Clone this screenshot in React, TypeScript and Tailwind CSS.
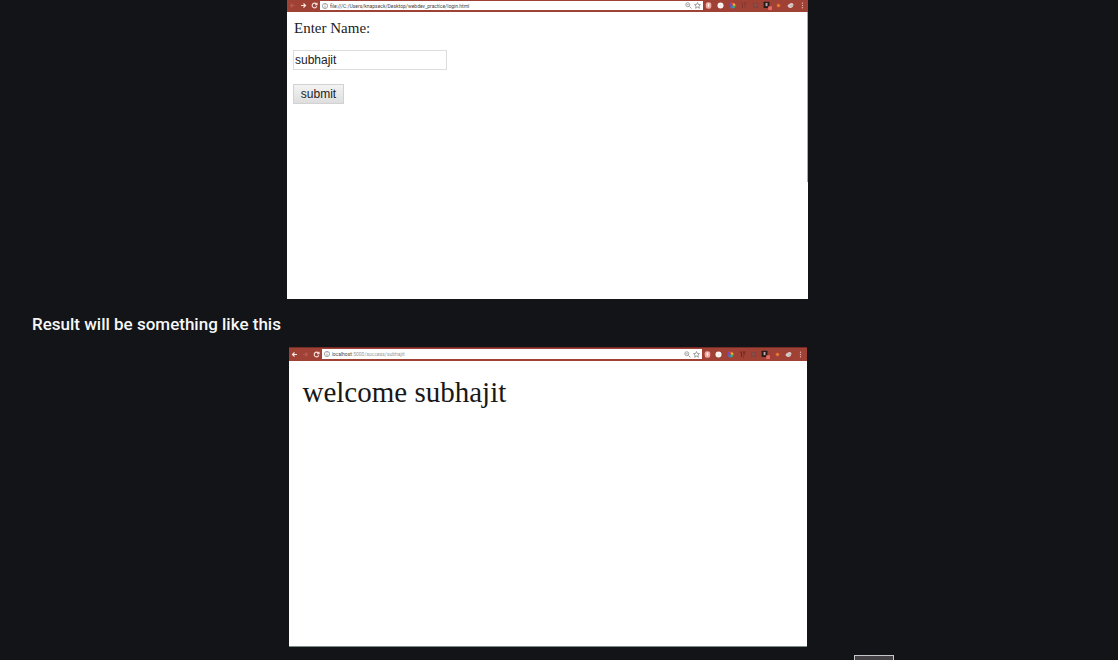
import type { ReactNode } from "react";

const ICON = "h-[7px] w-[7px] shrink-0";

function BackIcon() {
  return (
    <svg viewBox="0 0 14 14" className={ICON} fill="none" stroke="currentColor" strokeWidth="2.4">
      <path d="M12 7H3M7 3 3 7l4 4" />
    </svg>
  );
}

function ForwardIcon() {
  return (
    <svg viewBox="0 0 14 14" className={ICON} fill="none" stroke="currentColor" strokeWidth="2.4">
      <path d="M2 7h9M7 3l4 4-4 4" />
    </svg>
  );
}

function ReloadIcon() {
  return (
    <svg viewBox="0 0 14 14" className={ICON} fill="none" stroke="currentColor" strokeWidth="2.2">
      <path d="M11.500 8.500a4.700 4.700 0 1 1-1.300-5L12 5" />
      <path d="M12 1.500v4H8" />
    </svg>
  );
}

function InfoIcon() {
  return (
    <svg viewBox="0 0 14 14" className="h-[6px] w-[6px] shrink-0" fill="none" stroke="#888" strokeWidth="1.8">
      <circle cx="7" cy="7" r="6" />
      <path d="M7 6v5M7 3v1.6" />
    </svg>
  );
}

function Extensions({ dimPage }: { dimPage: boolean }) {
  return (
    <div className="grid w-[105px] shrink-0 grid-cols-9 place-items-center">
      <svg viewBox="0 0 14 14" className={ICON}>
        <rect x="1.500" y="0.500" width="11" height="13" rx="4" fill="#eda69e" />
        <path d="M5.500 3h3v5L7 11 5.500 8z" fill="#fdf2ef" />
      </svg>
      <svg viewBox="0 0 14 14" className={ICON}>
        <circle cx="7" cy="7" r="6" fill="#fbf5f3" />
        <circle cx="7" cy="7" r="2" fill="#eee6e4" />
      </svg>
      <svg viewBox="0 0 14 14" className={ICON}>
        <path d="M7 7 3 1a7 7 0 0 0-1 9z" fill="#7847b8" />
        <path d="M7 7 3 1a7 7 0 0 1 6 1z" fill="#df4536" />
        <path d="M7 7 9 2a6 6 0 0 1 4 6z" fill="#e6bf3b" />
        <path d="m7 7 6 1a6 6 0 0 1-5 5z" fill="#3fae60" />
        <path d="M7 7 2 10a7 7 0 0 0 6 3z" fill="#2b8bd0" />
      </svg>
      <svg viewBox="0 0 14 14" className={ICON} fill="none" stroke={dimPage ? "#83372e" : "#642820"} strokeWidth="2">
        <path d="M2 2h3v10M8 2h5M10 2v7M8 12h2" />
      </svg>
      <svg viewBox="0 0 14 14" className={ICON}>
        <path d="M2 2h10v10H2z" fill="#81443d" />
        <path d="M4 5h6M4 8h6" stroke="#986059" />
      </svg>
      <svg viewBox="0 0 14 14" className="h-[9px] w-[9px]">
        <rect x="1" y="1" width="9" height="10" rx="1" fill="#28191a" />
        <path d="M4 3h3v5H4z" fill="#b8aaa9" />
        <rect x="8" y="8" width="6" height="6" rx="1" fill="#ec6961" />
      </svg>
      <svg viewBox="0 0 14 14" className={ICON}>
        <path d="m7 2 5 5-5 5-5-5z" fill="#c8512a" />
        <circle cx="7" cy="7" r="2.400" fill="#f0883a" />
      </svg>
      <svg viewBox="0 0 14 14" className={ICON}>
        <path d="M1 8c1-3 3-3 5-5 3-2 6-1 7 2 0 3-2 6-5 7-3 0-6-1-7-4z" fill="#d9cac8" />
        <path d="m8 9 3-3" stroke="#9d9d9f" strokeWidth="2" />
      </svg>
      <svg viewBox="0 0 14 14" className={ICON} fill="#e2b2ab">
        <circle cx="7" cy="2.5" r="1.4" />
        <circle cx="7" cy="7" r="1.4" />
        <circle cx="7" cy="11.5" r="1.4" />
      </svg>
    </div>
  );
}

interface BrowserBarProps {
  backActive: boolean;
  className: string;
  children: ReactNode;
}

function BrowserBar({ backActive, className, children }: BrowserBarProps) {
  return (
    <div className={`flex shrink-0 items-stretch bg-[#a04136] ${className}`}>
      <div className="grid w-[33px] shrink-0 grid-cols-3 place-items-center text-[#f8e4e0]">
        <span className={backActive ? "" : "text-[#b5584d]"}>
          <BackIcon />
        </span>
        <span className={backActive ? "text-[#b5584d]" : ""}>
          <ForwardIcon />
        </span>
        <ReloadIcon />
      </div>
      <div className="flex min-w-0 flex-1 items-center gap-[2px] bg-white px-[2px]">
        <InfoIcon />
        <span className="flex-1 truncate font-['Roboto',sans-serif] text-[5px] leading-[8px] text-[#444]">
          {children}
        </span>
        <svg viewBox="0 0 14 14" className={ICON} fill="none" stroke="#999" strokeWidth="1.8">
          <circle cx="5.5" cy="5.5" r="4" />
          <path d="m9 9 4 4M3.5 5.5h4" />
        </svg>
        <svg viewBox="0 0 14 14" className={ICON} fill="none" stroke="#888" strokeWidth="1.6">
          <path d="m7 1 1.8 4 4.2.4-3.2 2.8 1 4.3L7 10.200l-3.800 2.300 1-4.300L1 5.400 5.200 5z" />
        </svg>
      </div>
      <Extensions dimPage={!backActive} />
    </div>
  );
}

export default function App() {
  return (
    <main className="flex h-screen flex-col overflow-hidden bg-[#121418] pr-[23px]">
      <section className="mx-auto h-[299px] w-full max-w-[521px] shrink-0 bg-white">
        <BrowserBar backActive={false} className="h-3 pt-px pb-[2px]">
          file:///C:/Users/knapseck/Desktop/webdev_practice/login.html
        </BrowserBar>
        <form
          className="flex h-[170px] flex-col items-start border-r border-[#aaa] px-[6px] pt-[7px]"
          onSubmit={(event) => event.preventDefault()}
        >
          <label
            htmlFor="name"
            className="pl-px font-['Liberation_Serif',serif] text-[15px] leading-[18px] text-[#222]"
          >
            Enter Name:
          </label>
          <input
            id="name"
            type="text"
            defaultValue="subhajit"
            className="mt-[13px] h-5 w-[154px] border border-[#ddd] bg-white px-px font-['Liberation_Sans',sans-serif] text-[12px] text-[#222] outline-none"
          />
          <button
            type="submit"
            className="mt-[14px] h-5 w-[51px] border border-[#d2d2d2] bg-linear-to-b from-[#f3f3f3] to-[#dedede] font-['Liberation_Sans',sans-serif] text-[12px] leading-[18px] text-[#222]"
          >
            submit
          </button>
        </form>
      </section>

      <p className="mt-[13px] pl-8 font-['Roboto',sans-serif] text-[17px] leading-6 font-medium text-[#f7f7f7]">
        Result will be something like this
      </p>

      <section className="mx-auto mt-[11px] flex h-[300px] w-full max-w-[518px] shrink-0 flex-col border-b border-[#7d8b86] bg-white">
        <BrowserBar backActive className="h-[14px] border-t border-[#742d26] pt-px pb-[2px]">
          localhost<span className="text-[#999]">:5000/success/subhajit</span>
        </BrowserBar>
        <p className="pt-[14px] pl-[14px] font-['Liberation_Serif',serif] text-[29px] leading-[34px] text-[#181818]">
          welcome subhajit
        </p>
      </section>

      <div className="mt-2 mr-[201px] h-5 w-10 shrink-0 self-end border border-[#c8c8c8] bg-[#444244]" />
    </main>
  );
}
